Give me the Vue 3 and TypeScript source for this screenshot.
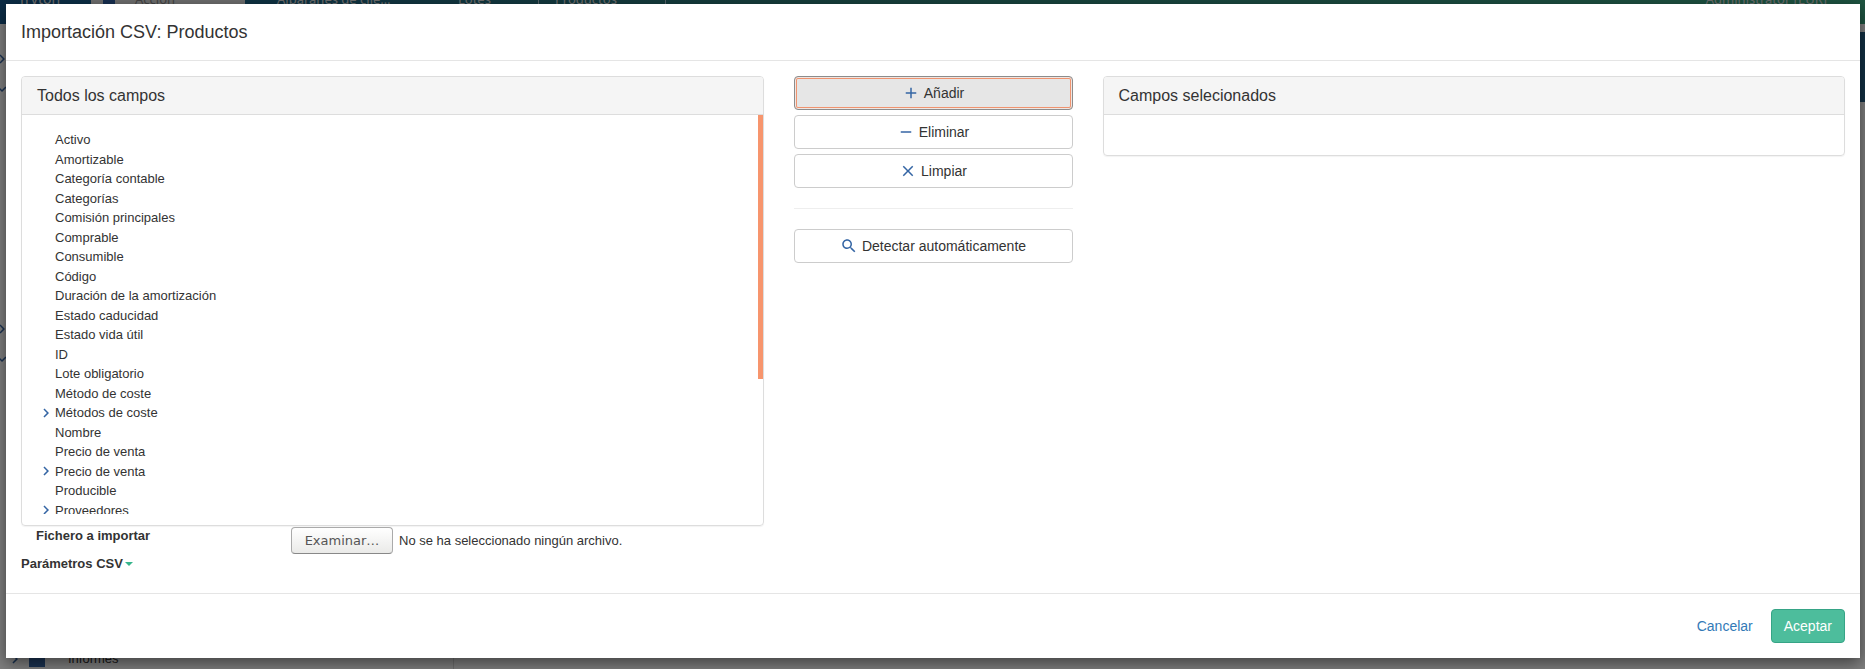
<script setup lang="ts">
import { ref } from 'vue'

interface Field {
  name: string
  expandable?: boolean
}

const fields: Field[] = [
  { name: 'Activo' },
  { name: 'Amortizable' },
  { name: 'Categoría contable' },
  { name: 'Categorías' },
  { name: 'Comisión principales' },
  { name: 'Comprable' },
  { name: 'Consumible' },
  { name: 'Código' },
  { name: 'Duración de la amortización' },
  { name: 'Estado caducidad' },
  { name: 'Estado vida útil' },
  { name: 'ID' },
  { name: 'Lote obligatorio' },
  { name: 'Método de coste' },
  { name: 'Métodos de coste', expandable: true },
  { name: 'Nombre' },
  { name: 'Precio de venta' },
  { name: 'Precio de venta', expandable: true },
  { name: 'Producible' },
  { name: 'Proveedores', expandable: true },
]

const actions = [
  { label: 'Añadir', active: true, path: 'M19 13h-6v6h-2v-6H5v-2h6V5h2v6h6v2z' },
  { label: 'Eliminar', active: false, path: 'M19 13H5v-2h14v2z' },
  {
    label: 'Limpiar',
    active: false,
    path: 'M19 6.41L17.59 5 12 10.59 6.41 5 5 6.41 10.59 12 5 17.59 6.41 19 12 13.41 17.59 19 19 17.59 13.41 12z',
  },
]

const searchPath =
  'M15.5 14h-.79l-.28-.27C15.41 12.59 16 11.11 16 9.5 16 5.91 13.09 3 9.5 3S3 5.91 3 9.5 5.91 16 9.5 16c1.61 0 3.09-.59 4.23-1.57l.27.28v.79l5 4.99L20.49 19l-4.99-5zm-6 0C7.01 14 5 11.99 5 9.5S7.01 5 9.5 5 14 7.01 14 9.5 11.99 14 9.5 14z'

const chevronPath = 'M10 6L8.59 7.41 13.17 12l-4.58 4.59L10 18l6-6z'
const chevronDownPath = 'M16.59 8.59L12 13.17 7.41 8.59 6 10l6 6 6-6z'

const fileInput = ref<HTMLInputElement | null>(null)
const fileName = ref('No se ha seleccionado ningún archivo.')

function pickFile() {
  fileInput.value?.click()
}

function onFile() {
  const file = fileInput.value?.files?.[0]
  if (file) fileName.value = file.name
}
</script>

<template>
  <div class="screen">
    <div class="app" aria-hidden="true">
      <div class="navbar">
        <span class="brand">Tryton</span>
        <span class="mark"></span>
        <span class="search">Acción</span>
        <span class="tab tab-first">Albaranes de clie…</span>
        <span class="tab tab-second">Lotes</span>
        <span class="tab tab-third">Productos</span>
        <span class="user">Administrator [EUR]</span>
      </div>
      <div class="workspace">
        <svg class="tree-icon tree-a" viewBox="0 0 24 24"><path :d="chevronPath" /></svg>
        <svg class="tree-icon tree-b" viewBox="0 0 24 24"><path :d="chevronDownPath" /></svg>
        <svg class="tree-icon tree-c" viewBox="0 0 24 24"><path :d="chevronPath" /></svg>
        <svg class="tree-icon tree-d" viewBox="0 0 24 24"><path :d="chevronDownPath" /></svg>
        <div class="toolbar"></div>
        <div class="menu-row">
          <svg class="menu-chevron" viewBox="0 0 24 24"><path :d="chevronPath" /></svg>
          <span class="folder"></span>
          <span>Informes</span>
        </div>
      </div>
    </div>
    <div class="backdrop"></div>

    <div class="modal" role="dialog" aria-labelledby="dialog-title">
      <header class="modal-header">
        <h4 id="dialog-title">Importación CSV: Productos</h4>
      </header>

      <main class="modal-body">
        <div class="row">
          <section class="col">
            <div class="panel">
              <h3 class="panel-heading">Todos los campos</h3>
              <div class="panel-scroll">
                <ul class="fields">
                  <li v-for="(field, i) in fields" :key="i">
                    <span class="expander">
                      <svg v-if="field.expandable" class="icon" viewBox="0 0 24 24"><path :d="chevronPath" /></svg>
                    </span>
                    <span>{{ field.name }}</span>
                  </li>
                </ul>
                <div class="scrollbar"></div>
              </div>
            </div>
          </section>

          <section class="col actions">
            <button
              v-for="action in actions"
              :key="action.label"
              type="button"
              class="btn btn-default"
              :class="{ active: action.active }"
            >
              <svg class="icon" viewBox="0 0 24 24"><path :d="action.path" /></svg>
              {{ action.label }}
            </button>
            <hr />
            <button type="button" class="btn btn-default">
              <svg class="icon" viewBox="0 0 24 24"><path :d="searchPath" /></svg>
              Detectar automáticamente
            </button>
          </section>

          <section class="col">
            <div class="panel">
              <h3 class="panel-heading">Campos selecionados</h3>
              <div class="panel-empty"></div>
            </div>
          </section>
        </div>

        <div class="file-row">
          <label for="import-file">Fichero a importar</label>
          <div class="file-control">
            <input id="import-file" ref="fileInput" type="file" class="file-native" @change="onFile" />
            <button type="button" class="browse" @click="pickFile">Examinar…</button>
            <span>{{ fileName }}</span>
          </div>
        </div>

        <button type="button" class="csv-toggle">Parámetros CSV<span class="caret"></span></button>
      </main>

      <footer class="modal-footer">
        <button type="button" class="btn btn-link">Cancelar</button>
        <button type="button" class="btn btn-primary">Aceptar</button>
      </footer>
    </div>
  </div>
</template>

<style>
body {
  margin: 0;
}
</style>

<style scoped>
* {
  box-sizing: border-box;
}

.screen {
  position: relative;
  min-height: 100vh;
  padding: 4px 5px 10px 6px;
  overflow: hidden;
  font-family: 'Liberation Sans', Arial, sans-serif;
  font-size: 13px;
  line-height: 20px;
  color: #333;
}

.app,
.backdrop {
  position: absolute;
  inset: 0;
}

.app {
  overflow: hidden;
  background: #fff;
}

.backdrop {
  background: rgba(0, 0, 0, 0.5);
}

.navbar {
  position: relative;
  height: 24px;
  background: linear-gradient(to right, #17598c, #2c7a78 40%, #3da882);
  color: #ddd;
  font-family: 'Noto Sans', sans-serif;
  font-size: 13px;
  line-height: 20px;
}

.navbar > span {
  position: absolute;
  top: -11px;
}

.navbar .brand {
  left: 18px;
  font-size: 14px;
}

.navbar .mark {
  top: 0;
  left: 91px;
  width: 34px;
  height: 8px;
  border: solid #ddd;
  border-width: 0 10px 0 12px;
  background: #2f5ea0;
}

.navbar .search {
  left: 125px;
  width: 120px;
  padding-left: 10px;
  background: #ddd;
  color: #888;
}

.navbar .tab-first {
  left: 277px;
}

.navbar .tab-second {
  left: 458px;
}

.navbar .tab-third {
  left: 538px;
  padding: 0 48px 0 16px;
  border: solid #b0c8d4;
  border-width: 0 1px;
}

.navbar .user {
  right: 38px;
}

.toolbar {
  position: absolute;
  top: 32px;
  right: 0;
  width: 8px;
  height: 70px;
  background: #246088;
}

.tree-icon {
  position: absolute;
  left: -7px;
  width: 18px;
  height: 18px;
  fill: #3465a4;
}

.tree-a {
  top: 50px;
}

.tree-b {
  top: 80px;
}

.tree-c {
  top: 320px;
}

.tree-d {
  top: 350px;
}

.menu-row {
  position: absolute;
  left: 6px;
  bottom: 0;
  display: flex;
  align-items: center;
  width: 448px;
  height: 20px;
  border-right: 1px solid #ddd;
}

.menu-chevron {
  width: 18px;
  height: 18px;
  fill: #3465a4;
}

.folder {
  width: 16px;
  height: 16px;
  margin: 0 23px 0 5px;
  background: #3465a4;
}

.modal {
  position: relative;
  background: #fff;
  box-shadow: 0 5px 15px rgba(0, 0, 0, 0.5);
}

.modal-header {
  padding: 15px;
  border-bottom: 1px solid #e5e5e5;
}

h4 {
  margin: 0;
  font-size: 18px;
  font-weight: 400;
  line-height: 26px;
}

.modal-body {
  padding: 15px 15px 19px;
}

.row {
  display: grid;
  grid-template-columns: minmax(0, 5fr) minmax(0, 2fr) minmax(0, 5fr);
  align-items: start;
  margin: 0 -15px;
}

.col {
  padding: 0 15px;
}

.panel {
  border: 1px solid #ddd;
  border-radius: 4px;
  overflow: hidden;
  box-shadow: 0 1px 1px rgba(0, 0, 0, 0.05);
}

.panel-heading {
  margin: 0;
  padding: 10px 15px 9px;
  border-bottom: 1px solid #ddd;
  background: #f5f5f5;
  font-size: 16px;
  font-weight: 400;
  line-height: 18px;
}

.panel-scroll {
  display: flex;
  justify-content: space-between;
}

.panel-empty {
  height: 40px;
}

.fields {
  flex: 1;
  height: 384px;
  margin: 15px 15px 11px;
  padding: 0;
  overflow: hidden;
  list-style: none;
  line-height: 1.5;
}

.fields li {
  display: flex;
  align-items: center;
}

.expander {
  display: flex;
  width: 18px;
}

.icon {
  flex: none;
  width: 18px;
  height: 18px;
  fill: #3465a4;
}

.scrollbar {
  width: 5px;
  height: 264px;
  background: #f7956d;
}

.actions {
  display: flex;
  flex-direction: column;
  gap: 5px;
}

hr {
  width: 100%;
  height: 1px;
  margin: 15px 0;
  border: 0;
  background: #eee;
}

.btn {
  display: flex;
  align-items: center;
  justify-content: center;
  gap: 4px;
  padding: 6px 12px;
  border: 1px solid transparent;
  border-radius: 4px;
  background: #fff;
  color: #333;
  font: 14px/20px 'Liberation Sans', Arial, sans-serif;
}

.btn-default {
  border-color: #ccc;
}

.btn-default.active {
  border-color: #8c8c8c;
  background: #e6e6e6;
  box-shadow: inset 0 0 0 1px #f0e6e2, inset 0 0 0 2px #ef936f;
}

.btn-link {
  color: #337ab7;
}

.btn-primary {
  border-color: #36a486;
  background: #4dbd9c;
  color: #fff;
}

.file-row {
  display: flex;
  padding: 0 15px;
}

.file-row label {
  width: 255px;
  font-weight: 700;
}

.file-control {
  display: flex;
  align-items: center;
  gap: 6px;
  padding-top: 1px;
}

.file-native {
  position: absolute;
  width: 1px;
  height: 1px;
  opacity: 0;
}

.browse {
  width: 102px;
  height: 27px;
  padding: 0;
  border: 1px solid #aaa;
  border-bottom-color: #888;
  border-radius: 4px;
  background: linear-gradient(#fff, #eaeae8);
  color: #555;
  font: 13px/20px 'DejaVu Sans', sans-serif;
}

.csv-toggle {
  display: flex;
  align-items: center;
  gap: 2px;
  padding: 0;
  border: 0;
  background: none;
  color: #333;
  font: 700 13px/20px 'Liberation Sans', Arial, sans-serif;
}

.caret {
  border: solid transparent;
  border-width: 4px 4px 0;
  border-top-color: #36b58c;
}

.modal-footer {
  display: flex;
  justify-content: flex-end;
  gap: 5px;
  padding: 15px;
  border-top: 1px solid #e5e5e5;
}
</style>
